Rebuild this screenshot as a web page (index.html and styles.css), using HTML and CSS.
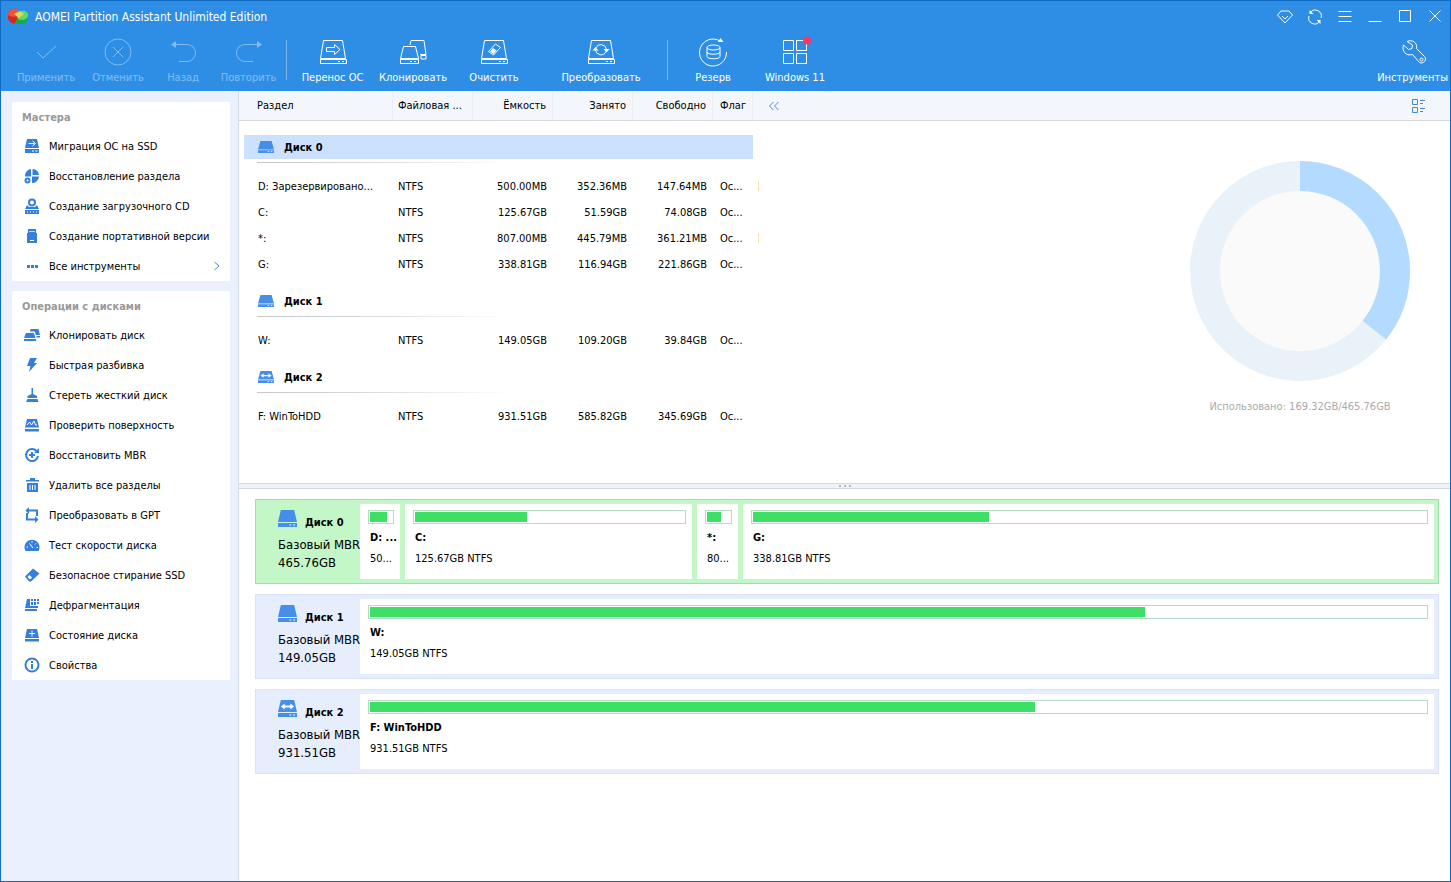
FILE: index.html
```html
<!DOCTYPE html>
<html lang="ru">
<head>
    <meta charset="UTF-8">
    <meta name="viewport" content="width=device-width, initial-scale=1.0">
    <title>AOMEI Partition Assistant Unlimited Edition</title>
    <link rel="stylesheet" href="styles.css">
</head>
<body>
    <!-- shared icons -->
    <svg class="sprite" aria-hidden="true">
        <symbol id="drive-outline" viewBox="0 0 30 30">
            <path d="M5.500 3.500h19l3 18h-25zM2.500 22.500h26v4h-26zM20 24.500h2M24 24.500h2"/>
        </symbol>
        <symbol id="drive" viewBox="0 0 20 17" preserveAspectRatio="none">
            <path d="M3 0h14l3 12H0zM0 13h20v4H0z"/>
            <path d="M12 15h2M16 15h2" stroke="#fff"/>
        </symbol>
        <symbol id="drive-usb" viewBox="0 0 20 17" preserveAspectRatio="none">
            <path d="M3 0h14l3 12H0zM0 13h20v4H0z"/>
            <path d="M12 15h2M16 15h2" stroke="#fff"/>
            <path d="M3 6.500l4-3v2h6v-2l4 3-4 3v-2H7v2z" fill="#fff"/>
        </symbol>
    </svg>

    <div class="window">
        <header class="header">
            <div class="titlebar">
                <svg class="logo" viewBox="0 0 20 18">
                    <path d="M10 8V1C4 0 0 3 0 7v3c0 3 3 5 7 6z" fill="#d9261c"/>
                    <path d="M10 8V1C4 0 0 3 0 7c3 2 7 2 10 1z" fill="#f0523c"/>
                    <path d="M10 8L7 15c6 3 13 0 13-5V7z" fill="#18a94a"/>
                    <path d="M9 8c0-3 4-6 8-5 4 2 4 6 1 8-4 2-9 1-9-3z" fill="#63d86a"/>
                    <path d="M6 6l6-3 4 3-5 4z" fill="#c9e25a"/>
                </svg>
                <h1>AOMEI Partition Assistant Unlimited Edition</h1>
                <div class="window-buttons">
                    <button type="button" aria-label="Upgrade"><svg viewBox="0 0 16 16"><path d="M4 2h8l3.500 4L8 14 .5 6zM5 7l3 3 3-3"/></svg></button>
                    <button type="button" aria-label="Refresh"><svg viewBox="0 0 16 16"><path d="M3.500 3.500A6 6 0 0 1 14 9M12.500 12.500A6 6 0 0 1 2 7"/><path d="M2.500 1v4h4zM13.500 15v-4h-4z" fill="#fff" stroke="none"/></svg></button>
                    <button type="button" aria-label="Menu"><svg viewBox="0 0 16 16"><path d="M1.500 2.500h13M1.500 7.500h13M1.500 12.500h13"/></svg></button>
                    <button type="button" aria-label="Minimize"><svg viewBox="0 0 16 16"><path d="M1.500 12.500h13"/></svg></button>
                    <button type="button" aria-label="Maximize"><svg viewBox="0 0 16 16"><path d="M2.500 1.500h11v11h-11z"/></svg></button>
                    <button type="button" aria-label="Close"><svg viewBox="0 0 16 16"><path d="M2.500 1.500l11 11M13.500 1.500l-11 11"/></svg></button>
                </div>
            </div>
            <nav class="toolbar">
                <button type="button" disabled>
                    <svg viewBox="0 0 30 30"><path d="M6 15l6 6L25 9"/></svg>
                    Применить
                </button>
                <button type="button" disabled>
                    <svg viewBox="0 0 30 30"><circle cx="15" cy="15" r="13"/><path d="M10 10l10 10M20 10L10 20"/></svg>
                    Отменить
                </button>
                <button type="button" disabled>
                    <svg viewBox="0 0 30 30"><path d="M6 7.500h13a8.500 8.500 0 0 1 0 17h-8"/><path d="M3 7.500L8 4v7z" class="solid"/></svg>
                    Назад
                </button>
                <button type="button" disabled>
                    <svg viewBox="0 0 30 30"><path d="M24 7.500H11a8.500 8.500 0 0 0 0 17h8"/><path d="M28 7.500L23 4v7z" class="solid"/></svg>
                    Повторить
                </button>
                <span class="separator"></span>
                <button type="button">
                    <svg viewBox="0 0 30 30"><use href="#drive-outline"/><path d="M8.500 10.500h8v-3l5.500 5-5.500 5v-3h-8z"/></svg>
                    Перенос ОС
                </button>
                <button type="button">
                    <svg viewBox="0 0 30 30"><path d="M5.500 9.500h12l3 12h-18zM2.500 22.500h18v4h-18zM12 24.500h2M16 24.500h2M12 8l1-4.500h13l2 14h-6M23 18.500h5v3.500h-5z"/></svg>
                    Клонировать
                </button>
                <button type="button">
                    <svg viewBox="0 0 30 30"><use href="#drive-outline"/><path d="M9.500 14.500l7-7.500 5 3.500-7 7.500z"/><path d="M11 14.500l3-3.500 3.500 2.500-3 3.500z" class="solid"/></svg>
                    Очистить
                </button>
                <button type="button">
                    <svg viewBox="0 0 30 30"><use href="#drive-outline"/><path d="M10 11a5.500 5.500 0 0 1 10.500 1.500M20 14.500a5.500 5.500 0 0 1-10.500-1.500"/><path d="M17.500 12h6l-3 3.500zM6.500 13.500h6l-3-3.500z" class="solid"/></svg>
                    Преобразовать
                </button>
                <span class="separator"></span>
                <button type="button">
                    <svg viewBox="0 0 30 30"><path d="M22 4A13.500 13.500 0 1 0 28.500 15"/><path d="M20 5l2.500-4 3 4z" class="solid"/><ellipse cx="15.500" cy="10.500" rx="6.500" ry="2.500"/><path d="M9 10.500v9c0 3 13 3 13 0v-9M9 15c0 3 13 3 13 0"/></svg>
                    Резерв
                </button>
                <button type="button">
                    <svg viewBox="0 0 30 30"><path d="M3.500 3.500h10v10h-10zM16.500 3.500h10v10h-10zM3.500 16.500h10v10h-10zM16.500 16.500h10v10h-10z"/><circle cx="27" cy="3.500" r="4" class="alert"/></svg>
                    Windows 11
                </button>
                <button type="button" class="tools">
                    <svg viewBox="0 0 30 30"><path d="M9 4.500c5-2.500 11 1.500 9.500 7l8 8c3 3-1 8-5 6l-7-8C8 19.500 3.500 14 5.500 8l5 4.500 3.500-1 .500-3.500z"/><circle cx="23.500" cy="22.500" r="1.500"/></svg>
                    Инструменты
                </button>
            </nav>
        </header>

        <div class="content">
            <aside class="sidebar">
                <section class="card">
                    <h2>Мастера</h2>
                    <button type="button"><svg viewBox="0 0 16 16"><path d="M3 1h10l2 9H1zM1 11h14v4H1z"/><path d="M4.500 5.500h6M8.500 3l3 2.500-3 2.500M8 13h2M11.500 13h2" class="cut"/></svg>Миграция ОС на SSD</button>
                    <button type="button"><svg viewBox="0 0 16 16"><path d="M7 1v7.500H1A7 7 0 0 1 7 1zM8.500 1A7 7 0 0 1 15 7H8.500zM15 8.500A7 7 0 0 1 8 15V8.500z"/><circle cx="3.500" cy="12.500" r="2" class="line"/></svg>Восстановление раздела</button>
                    <button type="button"><svg viewBox="0 0 16 16"><circle cx="8" cy="4.500" r="3" class="line"/><path d="M3 7l2 2h6l2-2 2 4H1zM1 12h14v4H1z"/><path d="M3 14h1M6 14h1M9 14h1M12 14h1" class="cut"/></svg>Создание загрузочного CD</button>
                    <button type="button"><svg viewBox="0 0 16 16"><path d="M4 1h8v4h1v10H3V5h1z"/><path d="M5.500 3.500h2M8.500 3.500h2M6 12.500h4" class="cut"/></svg>Создание портативной версии</button>
                    <button type="button"><svg viewBox="0 0 16 16"><path d="M3 7h3v3H3zM7 7h3v3H7zM11 7h3v3h-3z"/></svg>Все инструменты<svg class="chevron" viewBox="0 0 10 10"><path d="M2.500 1l4.500 4-4.500 4"/></svg></button>
                </section>
                <section class="card">
                    <h2>Операции с дисками</h2>
                    <button type="button"><svg viewBox="0 0 16 16"><path d="M2 6h8l1.500 5H0zM0 12h12v2H0zM6.500 2h8L16 8h-4l-1.500-3.500H6zM12.500 9H16v1.500h-3.500z"/></svg>Клонировать диск</button>
                    <button type="button"><svg viewBox="0 0 16 16"><path d="M6 1h7l-3 5h3L5 15l1.500-6H3z"/></svg>Быстрая разбивка</button>
                    <button type="button"><svg viewBox="0 0 16 16"><path d="M7.500 1h1.500v6l4 2v2H3.500V9l4-2zM3.500 12h10l1 3H2z"/></svg>Стереть жесткий диск</button>
                    <button type="button"><svg viewBox="0 0 16 16"><path d="M3 2h10l2 8.500H1zM1 12h14v2.500H1z"/><path d="M3 8l2.500-3 2 3 2.500-4 1.500 4H13" class="cut"/></svg>Проверить поверхность</button>
                    <button type="button"><svg viewBox="0 0 16 16"><path d="M12.500 4A6 6 0 1 0 14 9M8 5v6M5 8h6" class="line"/><path d="M15 1v5h-5z"/></svg>Восстановить MBR</button>
                    <button type="button"><svg viewBox="0 0 16 16"><path d="M6 1h5v2h4v1.500H2V3h4zM3 6h11v9H3z"/><path d="M6 8v5M8.500 8v5M11 8v5" class="cut"/></svg>Удалить все разделы</button>
                    <button type="button"><svg viewBox="0 0 16 16"><path d="M5 3.500h8V9M3 6v6.500h8" class="line"/><path d="M1.500 3.500L5 0v7zM14.500 12.500L11 9v7z"/></svg>Преобразовать в GPT</button>
                    <button type="button"><svg viewBox="0 0 16 16"><path d="M1.500 14A7.500 7.500 0 1 1 14.500 14z"/><path d="M5.500 6.500L9 11M2.500 10h1.500M8 4v1.500M12 6.500l-1 1M12.500 10.500H14" class="cut"/></svg>Тест скорости диска</button>
                    <button type="button"><svg viewBox="0 0 16 16"><path d="M1 9.500L9 1.500l6.500 5L7 14.500H5z"/><path d="M3.500 10L5.500 8l2.500 2.500L6 12.500z" fill="#fff"/></svg>Безопасное стирание SSD</button>
                    <button type="button"><svg viewBox="0 0 16 16"><path d="M3 2h3v7h8v2H1zM1 12h12v2H1zM7 2h2v2H7zM10 2h2v2h-2zM13 2h2v2h-2zM7 5h2v3H7zM10 5h2v3h-2zM13 5h2v2h-2z"/></svg>Дефрагментация</button>
                    <button type="button"><svg viewBox="0 0 16 16"><path d="M3 2h10l2 9H1zM1 12h14v2.500H1z"/><path d="M8 3.500v6M5 6.500h6" class="cut"/></svg>Состояние диска</button>
                    <button type="button"><svg viewBox="0 0 16 16"><circle cx="8" cy="8" r="6.500" class="line"/><path d="M7 7h2v5H7zM7 4h2v2H7z"/></svg>Свойства</button>
                </section>
            </aside>

            <main class="main">
                <div class="overview">
                    <table class="partitions">
                        <thead>
                            <tr>
                                <th class="name">Раздел</th>
                                <th>Файловая ...</th>
                                <th class="num">Ёмкость</th>
                                <th class="num">Занято</th>
                                <th class="num">Свободно</th>
                                <th class="flag">Флаг</th>
                                <th class="edge"></th>
                            </tr>
                        </thead>
                        <tbody>
                            <tr class="disk first">
                                <td colspan="7"><div class="disk-title selected"><svg><use href="#drive"/></svg>Диск 0</div></td>
                            </tr>
                            <tr><td class="name">D: Зарезервировано...</td><td>NTFS</td><td class="num">500.00MB</td><td class="num">352.36MB</td><td class="num">147.64MB</td><td class="flag">Ос...</td><td class="edge"><i></i></td></tr>
                            <tr><td class="name">C:</td><td>NTFS</td><td class="num">125.67GB</td><td class="num">51.59GB</td><td class="num">74.08GB</td><td class="flag">Ос...</td><td class="edge"></td></tr>
                            <tr><td class="name">*:</td><td>NTFS</td><td class="num">807.00MB</td><td class="num">445.79MB</td><td class="num">361.21MB</td><td class="flag">Ос...</td><td class="edge"><i></i></td></tr>
                            <tr><td class="name">G:</td><td>NTFS</td><td class="num">338.81GB</td><td class="num">116.94GB</td><td class="num">221.86GB</td><td class="flag">Ос...</td><td class="edge"></td></tr>
                            <tr class="disk">
                                <td colspan="7"><div class="disk-title"><svg><use href="#drive"/></svg>Диск 1</div></td>
                            </tr>
                            <tr><td class="name">W:</td><td>NTFS</td><td class="num">149.05GB</td><td class="num">109.20GB</td><td class="num">39.84GB</td><td class="flag">Ос...</td><td class="edge"></td></tr>
                            <tr class="disk">
                                <td colspan="7"><div class="disk-title"><svg><use href="#drive-usb"/></svg>Диск 2</div></td>
                            </tr>
                            <tr><td class="name">F: WinToHDD</td><td>NTFS</td><td class="num">931.51GB</td><td class="num">585.82GB</td><td class="num">345.69GB</td><td class="flag">Ос...</td><td class="edge"></td></tr>
                        </tbody>
                    </table>
                    <div class="usage">
                        <div class="usage-head">
                            <button type="button" aria-label="Collapse"><svg viewBox="0 0 14 14"><path d="M6.500 3l-4 4 4 4M11.500 3l-4 4 4 4"/></svg></button>
                            <button type="button" aria-label="View"><svg viewBox="0 0 14 14"><path d="M.5.5h5v5h-5zM.5 8.500h5v5h-5zM8 1.500h5M8 4.500h3M8 9.500h5M8 12.500h3"/></svg></button>
                        </div>
                        <figure class="chart">
                            <svg viewBox="0 0 220 220">
                                <circle cx="110" cy="110" r="82" fill="#fafafa"/>
                                <circle cx="110" cy="110" r="95" class="ring"/>
                                <circle cx="110" cy="110" r="95" class="ring used" pathLength="1000" stroke-dasharray="357 643" transform="rotate(-90 110 110)"/>
                            </svg>
                            <figcaption>Использовано: 169.32GB/465.76GB</figcaption>
                        </figure>
                    </div>
                </div>

                <div class="splitter"><span></span><span></span><span></span></div>

                <div class="disk-map">
                    <section class="disk-bar selected">
                        <div class="disk-info">
                            <h3><svg><use href="#drive"/></svg>Диск 0</h3>
                            <p>Базовый MBR</p>
                            <p>465.76GB</p>
                        </div>
                        <div class="volumes">
                            <div class="volume" style="flex-grow: 26">
                                <div class="bar"><div class="fill" style="width: 77%"></div></div>
                                <b>D: ...</b>
                                <span>50...</span>
                            </div>
                            <div class="volume" style="flex-grow: 273">
                                <div class="bar"><div class="fill" style="width: 41.5%"></div></div>
                                <b>C:</b>
                                <span>125.67GB NTFS</span>
                            </div>
                            <div class="volume" style="flex-grow: 27">
                                <div class="bar"><div class="fill" style="width: 60%"></div></div>
                                <b>*:</b>
                                <span>80...</span>
                            </div>
                            <div class="volume" style="flex-grow: 677">
                                <div class="bar"><div class="fill" style="width: 35%"></div></div>
                                <b>G:</b>
                                <span>338.81GB NTFS</span>
                            </div>
                        </div>
                    </section>
                    <section class="disk-bar">
                        <div class="disk-info">
                            <h3><svg><use href="#drive"/></svg>Диск 1</h3>
                            <p>Базовый MBR</p>
                            <p>149.05GB</p>
                        </div>
                        <div class="volumes">
                            <div class="volume" style="flex-grow: 1">
                                <div class="bar"><div class="fill" style="width: 73.4%"></div></div>
                                <b>W:</b>
                                <span>149.05GB NTFS</span>
                            </div>
                        </div>
                    </section>
                    <section class="disk-bar">
                        <div class="disk-info">
                            <h3><svg><use href="#drive-usb"/></svg>Диск 2</h3>
                            <p>Базовый MBR</p>
                            <p>931.51GB</p>
                        </div>
                        <div class="volumes">
                            <div class="volume" style="flex-grow: 1">
                                <div class="bar"><div class="fill" style="width: 63%"></div></div>
                                <b>F: WinToHDD</b>
                                <span>931.51GB NTFS</span>
                            </div>
                        </div>
                    </section>
                </div>
            </main>
        </div>
    </div>
</body>
</html>
```
FILE: styles.css
```css
* {
    box-sizing: border-box;
}
body {
    margin: 0;
    font-family: Tahoma, "DejaVu Sans Condensed", "DejaVu Sans", sans-serif;
    font-size: 11px;
    color: #000;
    background-color: #fff;
}
h1, h2, h3, p, figure {
    margin: 0;
}
button {
    padding: 0;
    border: none;
    background: none;
    font: inherit;
    color: inherit;
    white-space: nowrap;
}
.sprite {
    display: none;
}
.window {
    display: flex;
    flex-direction: column;
    min-height: 100vh;
    border: 1px solid #0f6cc2;
}

/* header */
.header {
    height: 90px;
    background-color: #2e8ee6;
    color: #fff;
}
.header svg {
    fill: none;
    stroke: #fff;
}
.titlebar {
    display: flex;
    align-items: center;
    height: 31px;
    padding-left: 7px;
}
.titlebar h1 {
    margin-left: 7px;
    font-size: 12px;
    font-weight: normal;
}
.titlebar .logo {
    width: 20px;
    height: 18px;
    stroke: none;
}
.window-buttons {
    display: flex;
    margin-left: auto;
}
.window-buttons button {
    width: 30px;
    height: 30px;
}
.window-buttons svg {
    display: block;
    width: 16px;
    height: 16px;
    margin: 0 auto;
}
.toolbar {
    display: grid;
    grid-template-columns: 70px 74px 56px 75px 6px 81px 80px 82px 132px 11px 70px 94px 1fr;
    height: 59px;
    padding-left: 10px;
}
.toolbar button {
    display: flex;
    flex-direction: column;
    align-items: center;
    padding-top: 5px;
    line-height: 14px;
    gap: 4px;
}
.toolbar button:disabled {
    opacity: 0.4;
}
.toolbar svg {
    width: 30px;
    height: 30px;
    overflow: visible;
}
.toolbar .solid {
    fill: #fff;
    stroke: none;
}
.toolbar .alert {
    fill: #ff3366;
    stroke: none;
}
.toolbar .tools {
    justify-self: end;
    padding-right: 2px;
}
.separator {
    width: 1px;
    height: 40px;
    margin-top: 8px;
    background-color: #79b7f0;
}

/* sidebar */
.content {
    display: flex;
    flex: 1;
}
.sidebar {
    display: flex;
    flex-direction: column;
    gap: 10px;
    flex: none;
    width: 238px;
    padding: 11px 8px 0 11px;
    background-color: #eaf0fe;
    border-right: 1px solid #d3dae8;
}
.card {
    background-color: #fff;
}
.card h2 {
    height: 29px;
    padding-left: 10px;
    font-size: 11px;
    line-height: 32px;
    color: #999;
}
.card button {
    display: flex;
    align-items: center;
    width: 100%;
    height: 30px;
    padding: 0 8px 0 12px;
    gap: 9px;
    text-align: left;
}
.card svg {
    width: 16px;
    height: 16px;
    fill: #337fdb;
}
.card .line {
    fill: none;
    stroke: #337fdb;
    stroke-width: 2;
}
.card .cut {
    fill: none;
    stroke: #fff;
    stroke-width: 1;
}
.card .chevron {
    width: 10px;
    height: 10px;
    margin-left: auto;
    fill: none;
    stroke: #338ae6;
}

/* partition list */
.main {
    flex: 1;
    min-width: 0;
}
.overview {
    display: flex;
    padding-bottom: 54px;
}
.partitions {
    flex: none;
    width: 520px;
    table-layout: fixed;
    border-collapse: separate;
    border-spacing: 0;
}
.partitions th {
    width: 80px;
    height: 30px;
    padding: 1px 6px 0 5px;
    border-right: 1px solid #ebeff5;
    border-bottom: 1px solid #d5d9df;
    background-color: #f3f6fa;
    font-weight: normal;
    line-height: 14px;
    text-align: left;
    white-space: nowrap;
}
.partitions td {
    height: 26px;
    padding: 0 6px 0 5px;
    white-space: nowrap;
}
.partitions .name {
    width: 154px;
    padding-left: 18px;
}
.partitions td.name {
    padding-left: 19px;
}
.partitions .num {
    text-align: right;
}
.partitions .flag {
    width: 40px;
    padding-left: 7px;
    padding-right: 0;
}
.partitions .edge {
    width: 6px;
    padding: 0;
    border-right: none;
}
.edge i {
    display: block;
    width: 1px;
    height: 10px;
    margin-left: auto;
    background-color: #f3e3b0;
}
.partitions .disk td {
    height: 50px;
    padding: 0 6px 10px 5px;
    vertical-align: bottom;
}
.partitions .first td {
    height: 52px;
}
.disk td::after {
    content: "";
    display: block;
    height: 1px;
    margin: 3px 240px 0 13px;
    background: linear-gradient(to right, #c4c8ce, #d4d8dc 40%, #fff);
}
.disk-title {
    display: flex;
    align-items: center;
    height: 24px;
    padding-left: 14px;
    gap: 10px;
    font-size: 11px;
    font-weight: bold;
}
.disk-title.selected {
    background-color: #cce1ff;
}
.disk-title svg {
    width: 16px;
    height: 12px;
    fill: #458eea;
}

/* usage chart */
.usage {
    flex: 1;
}
.usage-head {
    display: flex;
    align-items: center;
    justify-content: space-between;
    height: 30px;
    padding: 0 24px 0 8px;
    border-bottom: 1px solid #d5d9df;
    background-color: #f3f6fa;
}
.usage-head svg {
    display: block;
    width: 14px;
    height: 14px;
    fill: none;
    stroke: #4a85e0;
}
.chart {
    width: 300px;
    margin-left: auto;
    padding-top: 40px;
    text-align: center;
    color: #aaa;
}
.chart svg {
    display: block;
    width: 220px;
    height: 220px;
    margin: 0 auto 19px;
}
.chart .ring {
    fill: none;
    stroke: #eaf2f9;
    stroke-width: 30;
}
.chart .used {
    stroke: #b3daff;
}

.splitter {
    display: flex;
    align-items: center;
    justify-content: center;
    gap: 3px;
    height: 6px;
    border-top: 1px solid #d5d9df;
    border-bottom: 1px solid #d5d9df;
    background-color: #eff2f6;
}
.splitter span {
    width: 2px;
    height: 2px;
    background-color: #b4b9c2;
}

/* disk map */
.disk-map {
    display: flex;
    flex-direction: column;
    gap: 10px;
    padding: 10px 11px 10px 16px;
}
.disk-bar {
    display: flex;
    height: 85px;
    padding: 4px;
    padding-left: 0;
    border: 1px solid #dbe2f3;
    background-color: #e6eefd;
}
.disk-bar.selected {
    border-color: #a3dcae;
    background-color: #c3f7c8;
}
.disk-info {
    flex: none;
    width: 104px;
    padding: 6px 0 0 22px;
    font-size: 13px;
    line-height: 18px;
    white-space: nowrap;
}
.disk-info h3 {
    display: flex;
    align-items: flex-start;
    height: 26px;
    gap: 8px;
    font-size: 11px;
    line-height: 26px;
}
.disk-info svg {
    width: 19px;
    height: 17px;
    fill: #458eea;
}
.volumes {
    display: flex;
    flex: 1;
    gap: 5px;
    min-width: 0;
}
.volume {
    display: flex;
    flex-direction: column;
    flex-basis: 0;
    min-width: 0;
    padding: 6px 6px 0 8px;
    background-color: #fff;
    white-space: nowrap;
}
.volume b, .volume span {
    padding-left: 2px;
    line-height: 21px;
}
.volume b {
    margin-top: 3px;
}
.bar {
    height: 14px;
    padding: 1px;
    border: 1px solid #b5dcc8;
}
.fill {
    height: 10px;
    background-color: #3ddf64;
}
```
